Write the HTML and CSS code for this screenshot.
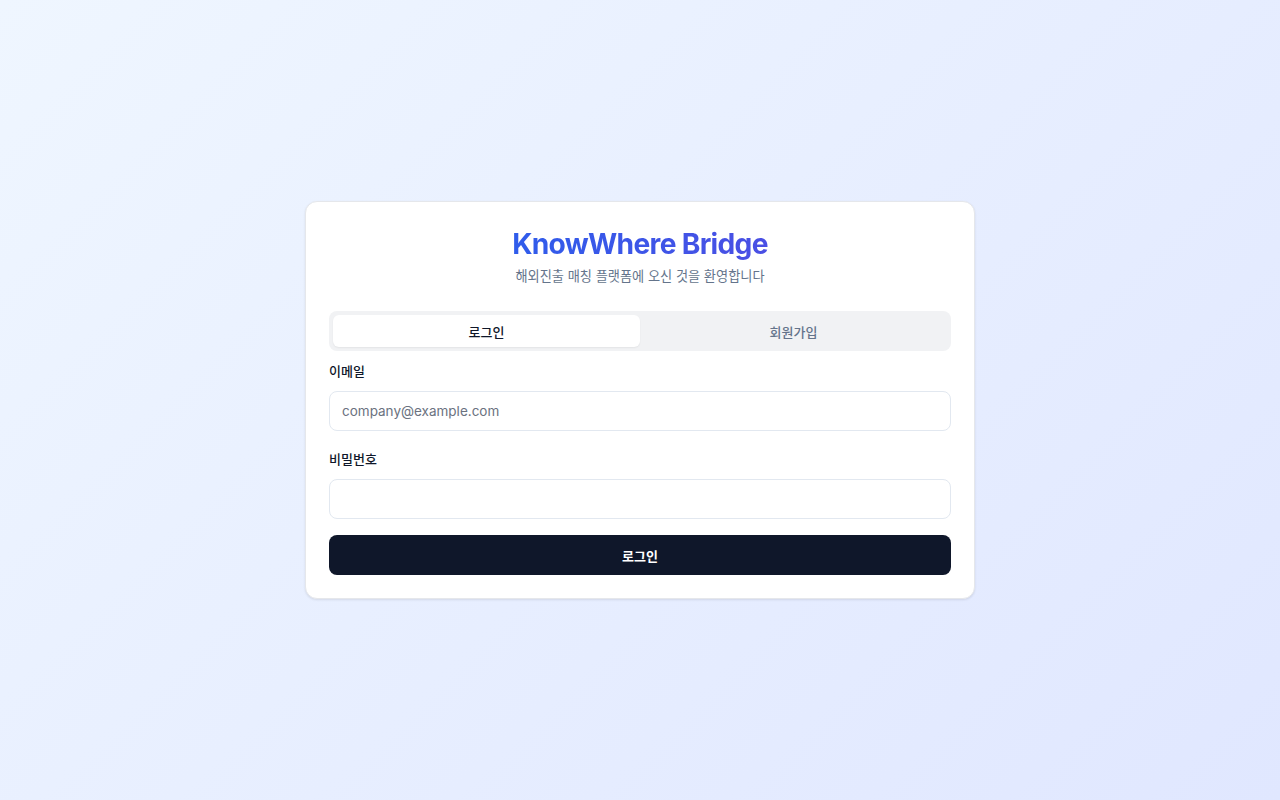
FILE: index.html
```html
<!DOCTYPE html>
<html lang="ko">
<head>
<meta charset="utf-8">
<title>KnowWhere Bridge</title>
<link rel="stylesheet" href="styles.css">
</head>
<body>
<main class="page">
  <section class="card">
    <header class="card-header">
      <h1 class="brand">KnowWhere Bridge</h1>
      <p class="tagline">해외진출 매칭 플랫폼에 오신 것을 환영합니다</p>
    </header>
    <div class="tabs">
      <button class="tab tab-active" type="button">로그인</button>
      <button class="tab" type="button">회원가입</button>
    </div>
    <form class="form">
      <div class="field">
        <label class="label" for="email">이메일</label>
        <input class="input" id="email" type="email" placeholder="company@example.com">
      </div>
      <div class="field">
        <label class="label" for="password">비밀번호</label>
        <input class="input" id="password" type="password">
      </div>
      <button class="submit" type="button">로그인</button>
    </form>
  </section>
</main>
</body>
</html>
```

FILE: styles.css
```css
* { box-sizing: border-box; }
html, body { margin: 0; padding: 0; }
body {
  font-family: Inter, "Noto Sans CJK KR", sans-serif;
  color: #0f172a;
  background: linear-gradient(135deg, #eff6ff 0%, #e0e7ff 100%);
  min-height: 100vh;
}
.page {
  min-height: 100vh;
  display: flex;
  align-items: center;
  justify-content: center;
  padding: 16px;
}
.card {
  width: 670px;
  height: 398px;
  background: #ffffff;
  border: 1px solid #e5e7eb;
  border-radius: 12px;
  box-shadow: 0 1px 3px rgba(0,0,0,0.06), 0 1px 2px rgba(0,0,0,0.04);
  padding: 24px 23px 24px;
}
.card-header {
  display: flex;
  flex-direction: column;
  align-items: center;
}
.brand {
  margin: 0;
  font-size: 28.2px;
  line-height: 36px;
  font-weight: 700;
  letter-spacing: -0.025em;
  background: linear-gradient(90deg, #2f5ceb, #4a4fe4);
  -webkit-background-clip: text;
  background-clip: text;
  color: transparent;
}
.tagline {
  margin: 4px 0 0;
  font-size: 13.2px;
  line-height: 20px;
  color: #64748b;
}
.tabs {
  margin-top: 25px;
  display: grid;
  grid-template-columns: 1fr 1fr;
  background: #f1f2f4;
  border-radius: 8px;
  padding: 4px;
  height: 40px;
}
.tab {
  border: 0;
  background: transparent;
  font-family: inherit;
  font-size: 13px;
  font-weight: 500;
  color: #64748b;
  border-radius: 6px;
  cursor: pointer;
}
.tab-active {
  background: #ffffff;
  color: #0f172a;
  box-shadow: 0 1px 2px rgba(0,0,0,0.06);
}
.form {
  margin-top: 10px;
  display: flex;
  flex-direction: column;
}
.field {
  display: flex;
  flex-direction: column;
  gap: 10px;
  margin-bottom: 18px;
}
.field:nth-child(2) { margin-bottom: 16px; }
.label {
  font-size: 13px;
  line-height: 20px;
  font-weight: 500;
  color: #0f172a;
}
.input {
  height: 40px;
  border: 1px solid #e2e8f0;
  border-radius: 8px;
  padding: 0 12px;
  font-family: inherit;
  font-size: 13.5px;
  color: #0f172a;
  background: #fff;
  outline: none;
}
.input::placeholder { color: #6b7280; }
.submit {
  height: 40px;
  border: 0;
  border-radius: 8px;
  background: #0f172a;
  color: #ffffff;
  font-family: inherit;
  font-size: 13px;
  font-weight: 600;
  cursor: pointer;
}
```
